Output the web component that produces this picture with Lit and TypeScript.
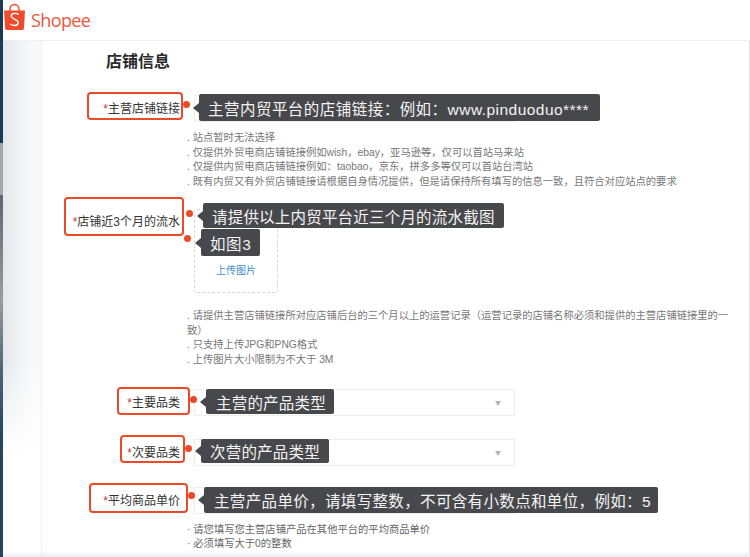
import { LitElement, html, css } from "lit";
import { customElement } from "lit/decorators.js";

const boxes = [
  [87, 92, 96, 28], [64, 197, 120, 39], [117, 387, 73, 28], [120, 435, 65, 28], [89, 483, 99, 30],
];
const dots = [[186, 104], [189, 213], [187, 238], [193, 399], [188, 448], [191, 495]];
const tips = [
  { x: 199, y: 94, w: 401, h: 27, pad: 9, ls: 0.47, t: "主营内贸平台的店铺链接：例如：www.pinduoduo****" },
  { x: 203, y: 203, w: 301, h: 25, pad: 9, ls: 0.2, t: "请提供以上内贸平台近三个月的流水截图" },
  { x: 201, y: 229, w: 59, h: 27, pad: 9, ls: 0.6, t: "如图3" },
  { x: 206, y: 389, w: 128, h: 25, pad: 10, ls: 0.2, t: "主营的产品类型" },
  { x: 201, y: 439, w: 128, h: 24, pad: 9, ls: 0.2, t: "次营的产品类型" },
  { x: 204, y: 487, w: 454, h: 26, pad: 10, ls: 0.35, t: "主营产品单价，请填写整数，不可含有小数点和单位，例如：5" },
];

@customElement("app-root")
export class AppRoot extends LitElement {
  static styles = css`
    :host { display: flex; width: 750px; height: 557px; overflow: hidden; position: relative; background: #fff;
      font-family: "Liberation Sans", "Noto Sans CJK SC", sans-serif; }
    .edge { width: 3px; flex: none; background: linear-gradient(#1d3a55 0, #1d3a55 143px, #a5a8ab 143px, #a5a8ab 195px, #5d6670 195px, #9a9c98 300px, #4f6478 370px, #27435f 440px, #27435f 100%); }
    .page { flex: 1; min-width: 0; display: flex; flex-direction: column; }
    .header { height: 41px; flex: none; display: flex; align-items: flex-start; gap: 5px; padding-top: 3px; box-sizing: border-box;
      background: #fff; border-bottom: 1px solid #f0f0f0; }
    .word { font: 18px/34px "Open Sans", "Noto Sans", sans-serif; color: #e8583c; letter-spacing: -0.6px; }
    .main { display: flex; flex: 1; }
    .side { width: 39px; box-sizing: border-box; border-right: 1px solid #f3f3f3;
      background: linear-gradient(rgba(255,255,255,0) 62%, #fff 80%), linear-gradient(90deg, #e4e7eb, #f8f8f9 70%, #fafafa); }
    .card { flex: 1; border-right: 1px solid #e4e6e9; background: #fff; box-sizing: border-box; }
    h1 { margin: 13px 0 0 64px; font-size: 16px; line-height: 16px; font-weight: 700; color: #2b2b2b; }
    .row { display: grid; grid-template-columns: 138px 1fr; column-gap: 14px; }
    .label { font-size: 12px; color: #333; text-align: right; white-space: nowrap; line-height: 14px; padding-top: 7px; }
    .label i { font-style: normal; color: #c8343a; }
    .input { width: 321px; height: 27px; box-sizing: border-box; border: 1px solid #eee; background: #fff; position: relative; }
    .caret { position: absolute; right: 13px; top: 11px; width: 0; height: 0;
      border-left: 3.5px solid transparent; border-right: 3.5px solid transparent; border-top: 5px solid #b4b4b4; }
    .r1 { margin-top: 25px; }
    .notes { margin: 9px 0 0 145px; width: 546px; font-size: 10.3px; line-height: 14.7px; color: #777; }
    .r2 { margin-top: 19px; }
    .r2 .label { padding-top: 6px; }
    .upload { width: 84px; height: 84px; box-sizing: border-box; border: 1px dashed #d5d5d5; border-radius: 3px;
      display: flex; justify-content: center; align-items: flex-end; padding-bottom: 14px; font-size: 10px; line-height: 14px; color: #3d8dcb; }
    .n2 { margin-top: 16px; }
    .r3 { margin-top: 21px; }
    .r4 { margin-top: 23px; }
    .r5 { margin-top: 21px; }
    .n3 { margin-top: 9px; color: #666; }
    .fade { position: absolute; left: 3px; right: 0; bottom: 0; height: 6px; background: linear-gradient(rgba(232,235,240,0), #e9ecf0); }
    .box { position: absolute; box-sizing: border-box; border: 2px solid #ea4a28; border-radius: 4px; }
    .dot { position: absolute; width: 7px; height: 7px; margin: -3.5px 0 0 -3.5px; border-radius: 50%; background: #ea4a28; }
    .tip { position: absolute; box-sizing: border-box; background: #46484b; color: #f4f4f4; border-radius: 2px;
      font-size: 15.5px; white-space: nowrap; display: flex; align-items: center; }
    .tip::before { content: ""; position: absolute; left: -6px; top: 50%; margin-top: -5px; width: 0; height: 0;
      border-top: 5px solid transparent; border-bottom: 5px solid transparent; border-right: 6px solid #46484b; }
  `;

  render() {
    return html`
      <div class="edge"></div>
      <div class="page">
        <div class="header">
          <svg width="23" height="28" viewBox="0 0 23 28">
            <path d="M1 7.500h21l-1 17.500a2 2 0 0 1-2 2H4a2 2 0 0 1-2-2z" fill="#ee4d2d"/>
            <path d="M7 8V6a4.500 4.500 0 0 1 9 0v2" fill="none" stroke="#ee4d2d" stroke-width="1.500"/>
            <path d="M15.500 11.500c-1-1.200-7-2.300-7.300 1.400-.2 3.700 7.300 2.700 7 7-.2 3.300-6 3.200-8 1" fill="none" stroke="#fff" stroke-width="1.400"/>
          </svg>
          <span class="word">Shopee</span>
        </div>
        <div class="main">
          <div class="side"></div>
          <div class="card">
            <h1>店铺信息</h1>
            <div class="row r1"><div class="label"><i>*</i>主营店铺链接</div><div class="input"></div></div>
            <div class="notes">
              . 站点暂时无法选择<br>
              . 仅提供外贸电商店铺链接例如wish，ebay，亚马逊等，仅可以首站马来站<br>
              . 仅提供内贸电商店铺链接例如：taobao，京东，拼多多等仅可以首站台湾站<br>
              . 既有内贸又有外贸店铺链接请根据自身情况提供，但是请保持所有填写的信息一致，且符合对应站点的要求
            </div>
            <div class="row r2"><div class="label"><i>*</i>店铺近3个月的流水</div><div class="upload">上传图片</div></div>
            <div class="notes n2">
              . 请提供主营店铺链接所对应店铺后台的三个月以上的运营记录（运营记录的店铺名称必须和提供的主营店铺链接里的一致）<br>
              . 只支持上传JPG和PNG格式<br>
              . 上传图片大小限制为不大于 3M
            </div>
            <div class="row r3"><div class="label"><i>*</i>主要品类</div><div class="input"><span class="caret"></span></div></div>
            <div class="row r4"><div class="label"><i>*</i>次要品类</div><div class="input"><span class="caret"></span></div></div>
            <div class="row r5"><div class="label"><i>*</i>平均商品单价</div><div class="input"></div></div>
            <div class="notes n3">
              · 请您填写您主营店铺产品在其他平台的平均商品单价<br>
              · 必须填写大于0的整数
            </div>
          </div>
        </div>
      </div>
      <div class="fade"></div>
      ${boxes.map(([x, y, w, h]) => html`<div class="box" style="left:${x}px;top:${y}px;width:${w}px;height:${h}px"></div>`)}
      ${dots.map(([x, y]) => html`<div class="dot" style="left:${x}px;top:${y}px"></div>`)}
      ${tips.map((t) => html`<div class="tip" style="left:${t.x}px;top:${t.y}px;width:${t.w}px;height:${t.h}px;padding-left:${t.pad}px;letter-spacing:${t.ls}px">${t.t}</div>`)}
    `;
  }
}
